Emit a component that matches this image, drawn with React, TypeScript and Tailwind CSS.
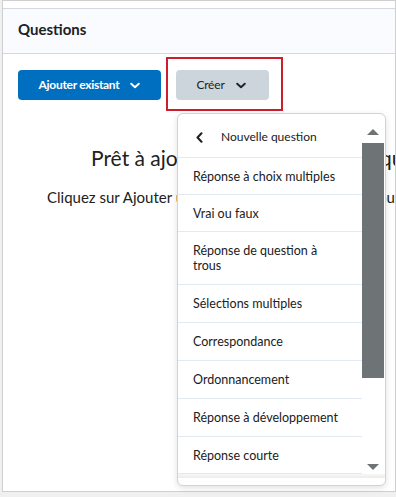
import React from "react";

function ChevronDown({ className }: { className?: string }) {
  return (
    <svg viewBox="0 0 10 6" className={className} aria-hidden>
      <path d="M1.2 1.2L5 4.8L8.8 1.2" fill="none" stroke="currentColor" strokeWidth="1.9" strokeLinecap="round" strokeLinejoin="round" />
    </svg>
  );
}

function ChevronLeft({ className }: { className?: string }) {
  return (
    <svg viewBox="0 0 6 10" className={className} aria-hidden>
      <path d="M4.8 1.2L1.2 5L4.8 8.8" fill="none" stroke="currentColor" strokeWidth="1.9" strokeLinecap="round" strokeLinejoin="round" />
    </svg>
  );
}

const items: { label: React.ReactNode; h: string }[] = [
  { label: "Réponse à choix multiples", h: "h-[37px]" },
  { label: "Vrai ou faux", h: "h-[37px]" },
  { label: <>Réponse de question à<br />trous</>, h: "h-[53px]" },
  { label: "Sélections multiples", h: "h-[38px]" },
  { label: "Correspondance", h: "h-[38px]" },
  { label: "Ordonnancement", h: "h-[38px]" },
  { label: "Réponse à développement", h: "h-[38px]" },
  { label: "Réponse courte", h: "h-[37px]" },
  { label: "Réponse arithmétique", h: "h-[38px]" },
];

export default function App() {
  return (
    <div className="relative w-[396px] h-[497px] overflow-hidden bg-[#f0f0f0] font-[Lato,'Noto_Sans',sans-serif] text-[#202122]">
      <div className="ml-[2px] w-[394px] h-[492px] bg-white border-x border-b border-t border-[#cfcfcf] flex flex-col overflow-hidden">
        <div className="h-[7px] shrink-0" />
        <div className="h-[46px] shrink-0 bg-[#f9fbff] border-y border-[#d3d9e3] flex items-center pl-[15px] pb-[3px]">
          <span className="text-[15px] font-bold leading-none">Questions</span>
        </div>
        <div className="pt-[16px] pl-[15px]">
          <div className="flex gap-[15px]">
            <div className="w-[143px] h-[30px] rounded-[4px] bg-[#006fbf] text-white text-[12px] font-bold tracking-[-0.3px] flex items-center justify-center gap-[11px]">
              <span>Ajouter existant</span>
              <ChevronDown className="w-[10px] h-[7px]" />
            </div>
            <div className="w-[93px] h-[30px] rounded-[4px] bg-[#cdd5dc] text-[#202122] text-[12px] tracking-[-0.2px] flex items-center justify-center gap-[11px] pr-[3px]">
              <span>Créer</span>
              <ChevronDown className="w-[10px] h-[7px]" />
            </div>
          </div>
        </div>
        <div className="mt-[45px] pl-[88px] whitespace-nowrap text-[21px] leading-[26px] text-[#202122]">
          Prêt à ajouter des questions au questionnaire?
        </div>
        <div className="mt-[16px] pl-[44px] whitespace-nowrap text-[15px] leading-[20px] text-[#202122]">
          Cliquez sur Ajouter un élément existant ou Créer pour commencer.
        </div>
      </div>

      {/* annotation box */}
      <div className="absolute left-[166px] top-[57px] w-[117px] h-[54px] border-2 border-[#cc1f2b]" />

      {/* dropdown menu */}
      <div className="absolute left-[177px] top-[113px] w-[209px] h-[373px] bg-white border border-[#cdd5dc] rounded-[6px] shadow-[0_2px_6px_rgba(0,0,0,0.12)] overflow-hidden flex">
        <div className="w-[184px] shrink-0 flex flex-col">
          <div className="h-[44px] shrink-0 border-b border-[#e3e9f1] flex items-center pl-[18px] pt-[3px] gap-[18px] text-[12px] text-[#202122]">
            <ChevronLeft className="w-[7px] h-[11px] text-[#202122]" />
            <span>Nouvelle question</span>
          </div>
          {items.map((it, i) => (
            <div
              key={i}
              className={`${it.h} shrink-0 border-b border-[#e3e9f1] flex items-center pl-[15px] text-[12.5px] leading-[15px] text-[#202122] whitespace-nowrap`}
            >
              <span>{it.label}</span>
            </div>
          ))}
        </div>
        <div className="flex-1 flex flex-col">
          <div className="h-[29px] shrink-0 flex items-end justify-center pb-[8px] pr-[1px]">
            <div className="w-0 h-0 border-l-[6px] border-r-[6px] border-b-[6px] border-l-transparent border-r-transparent border-b-[#6e7376]" />
          </div>
          <div className="w-[22px] h-[235px] shrink-0 bg-[#6e7376]" />
          <div className="flex-1" />
          <div className="h-[18px] shrink-0 flex items-center justify-center pr-[1px]">
            <div className="w-0 h-0 border-l-[6px] border-r-[6px] border-t-[6px] border-l-transparent border-r-transparent border-t-[#6e7376]" />
          </div>
          <div className="h-[9px] shrink-0" />
        </div>
        <div className="absolute left-0 right-0 bottom-[7px] h-[4px] bg-gradient-to-b from-[#f7f7f7] to-[#ececec]" />
      </div>
    </div>
  );
}
